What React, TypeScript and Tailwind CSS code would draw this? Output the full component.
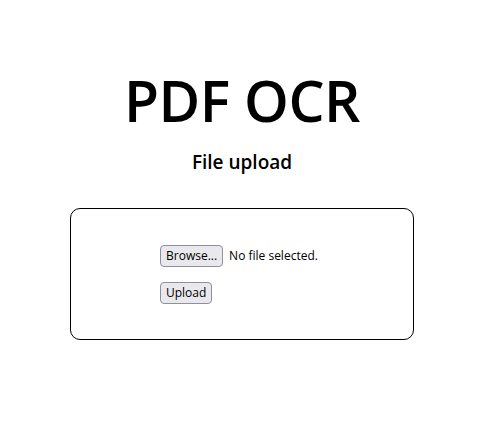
import React from "react";

export default function App() {
  return (
    <div className="w-[484px] min-h-[424px] bg-white flex flex-col items-center font-['Open_Sans',sans-serif] text-black">
      <h1 className="mt-[62px] text-[57px] leading-[76px] font-semibold tracking-[-0.5px]">PDF OCR</h1>
      <h2 className="mt-[10px] text-[19px] leading-[28px] font-semibold">File upload</h2>
      <form className="mt-[32px] w-[344px] h-[132px] border border-black rounded-[10px] flex flex-col gap-[12px] pt-[36px] pl-[89px]">
        <div className="flex items-center gap-[6px] text-[12px]">
          <button
            type="button"
            className="h-[22px] px-[5px] bg-[#e9e9ed] border border-[#8f8f9d] rounded-[4px] text-[12px] leading-none"
          >
            Browse...
          </button>
          <span>No file selected.</span>
        </div>
        <div>
          <button
            type="submit"
            className="h-[22px] px-[5px] bg-[#e9e9ed] border border-[#8f8f9d] rounded-[4px] text-[12px] leading-none"
          >
            Upload
          </button>
        </div>
      </form>
    </div>
  );
}
